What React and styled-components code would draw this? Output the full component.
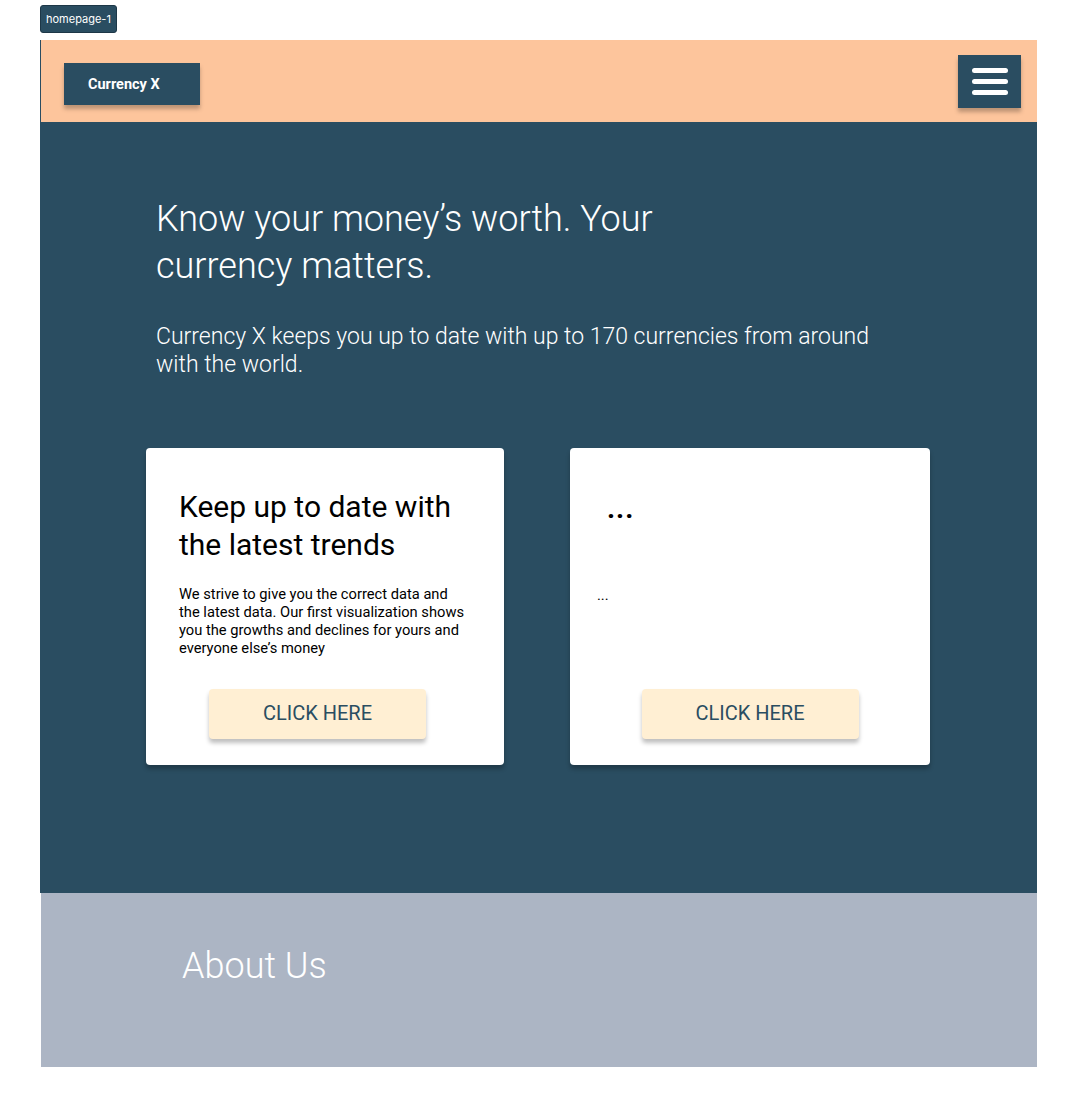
import React from 'react';
import styled, { createGlobalStyle } from 'styled-components';

const GlobalStyle = createGlobalStyle`
  body {
    margin: 0;
    background: #ffffff;
    font-family: Roboto, "Liberation Sans", sans-serif;
  }
`

const Page = styled.div`
  width: 997px;
  padding: 5px 40px 40px;
`

const FrameLabel = styled.div`
  display: inline-flex;
  align-items: center;
  height: 26px;
  padding: 0 5px;
  margin-bottom: 7px;
  background: #2a4d61;
  border: 1px solid #1d3747;
  border-radius: 3px;
  color: #ffffff;
  font-family: Inter, Roboto, sans-serif;
  font-size: 11px;
`

const Header = styled.header`
  display: flex;
  justify-content: space-between;
  align-items: flex-start;
  height: 82px;
  padding: 0 16px 0 23px;
  background: #fdc59c;
  border-left: 1px solid #2a4d61;
`

const Logo = styled.div`
  display: flex;
  align-items: center;
  width: 136px;
  height: 42px;
  margin-top: 23px;
  padding-left: 24px;
  box-sizing: border-box;
  background: #2a4d61;
  box-shadow: 0 4px 4px rgba(0, 0, 0, 0.25);
  color: #ffffff;
  font-size: 14.5px;
  font-weight: 700;
`

const MenuButton = styled.button`
  display: flex;
  flex-direction: column;
  justify-content: center;
  align-items: center;
  gap: 6px;
  width: 63px;
  height: 53px;
  margin-top: 15px;
  padding: 0;
  border: none;
  background: #2a4d61;
  box-shadow: 0 4px 4px rgba(0, 0, 0, 0.25);
`

const MenuLine = styled.span`
  display: block;
  width: 36px;
  height: 5px;
  border-radius: 3px;
  background: #ffffff;
`

const Hero = styled.section`
  background: #2a4d61;
  padding: 74px 0 128px;
`

const HeroText = styled.div`
  padding-left: 116px;
  color: #ffffff;
  font-weight: 300;
`

const Headline = styled.h1`
  width: 540px;
  margin: 0;
  font-size: 36px;
  line-height: 47px;
  font-weight: 300;
`

const Lead = styled.p`
  width: 730px;
  margin: 33px 0 0;
  font-size: 23px;
  line-height: 28px;
`

const CardRow = styled.div`
  display: flex;
  gap: 66px;
  margin-top: 69px;
  padding-left: 106px;
`

const Card = styled.article`
  display: flex;
  flex-direction: column;
  width: ${p => p.$width}px;
  height: 317px;
  box-sizing: border-box;
  padding: 40px 0 26px;
  background: #ffffff;
  border-radius: 4px;
  box-shadow: 0 4px 4px rgba(0, 0, 0, 0.25);
`

const CardTitle = styled.h2`
  margin: 0;
  padding: 0 40px 0 ${p => p.$indent}px;
  color: #000000;
  font-size: 30px;
  line-height: 38px;
  font-weight: 400;
`

const Dots = styled.div`
  padding-left: 37px;
  margin-top: 2px;
  color: #000000;
  font-size: 28px;
  font-weight: 700;
  line-height: 38px;
  letter-spacing: 1px;
`

const CardBody = styled.p`
  margin: ${p => p.$gap}px 0 0;
  padding: 0 35px 0 ${p => p.$indent}px;
  color: #000000;
  font-size: 14.7px;
  line-height: 18px;
`

const CardButton = styled.button`
  align-self: center;
  width: 217px;
  height: 50px;
  margin-top: auto;
  margin-right: ${p => p.$shift}px;
  padding-bottom: 3px;
  border: none;
  border-radius: 4px;
  background: #ffefd3;
  box-shadow: 0 4px 4px rgba(0, 0, 0, 0.25);
  color: #2a4d61;
  font-family: Roboto, sans-serif;
  font-size: 20px;
`

const About = styled.section`
  height: 174px;
  margin-left: 1px;
  padding: 46px 0 0 141px;
  box-sizing: border-box;
  background: #acb5c4;
`

const AboutTitle = styled.h2`
  margin: 0;
  color: #ffffff;
  font-size: 36px;
  line-height: 54px;
  font-weight: 300;
`

const App = () => (
  <Page>
    <GlobalStyle />
    <FrameLabel>homepage-1</FrameLabel>
    <Header>
      <Logo>Currency X</Logo>
      <MenuButton aria-label="menu">
        <MenuLine />
        <MenuLine />
        <MenuLine />
      </MenuButton>
    </Header>
    <Hero>
      <HeroText>
        <Headline>Know your money’s worth. Your currency matters.</Headline>
        <Lead>Currency X keeps you up to date with up to 170 currencies from around with the world.</Lead>
      </HeroText>
      <CardRow>
        <Card $width={358}>
          <CardTitle $indent={33}>Keep up to date with the latest trends</CardTitle>
          <CardBody $indent={33} $gap={21}>
            We strive to give you the correct data and the latest data. Our first visualization shows
            you the growths and declines for yours and everyone else’s money
          </CardBody>
          <CardButton $shift={15}>CLICK HERE</CardButton>
        </Card>
        <Card $width={360}>
          <Dots>...</Dots>
          <CardBody $indent={27} $gap={58}>...</CardBody>
          <CardButton $shift={0}>CLICK HERE</CardButton>
        </Card>
      </CardRow>
    </Hero>
    <About>
      <AboutTitle>About Us</AboutTitle>
    </About>
  </Page>
)

export default App
